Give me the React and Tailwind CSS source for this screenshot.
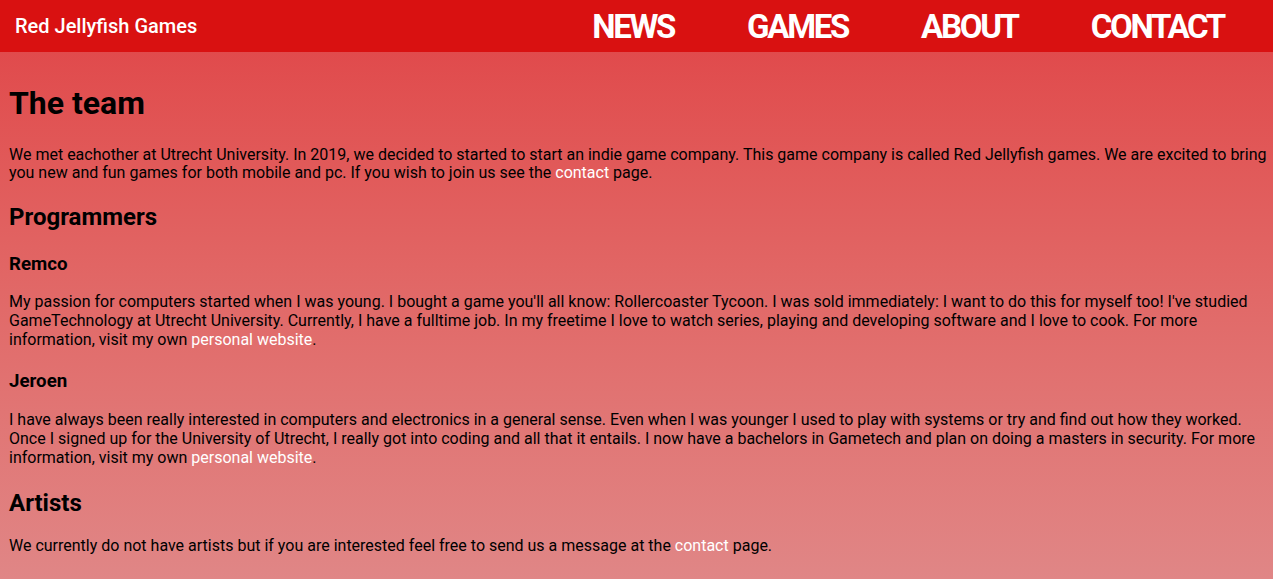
import React from 'react'

const font = { fontFamily: 'Roboto, "Liberation Sans", sans-serif' }

const navItems = ['NEWS', 'GAMES', 'ABOUT', 'CONTACT']

const Link = ({ children }) => (
  <a href="#" className="text-white">{children}</a>
)

export default function App() {
  return (
    <div className="min-h-[579px] bg-gradient-to-b from-[#e04346] to-[#e08686] text-black" style={font}>
      {/* Header */}
      <header className="h-[52px] bg-[#d91111] flex items-center justify-between pl-[15px] pr-[49px]">
        <div className="text-white text-[20px] font-medium">Red Jellyfish Games</div>
        <nav className="flex gap-[73px]">
          {navItems.map((item) => (
            <a key={item} href="#" className="text-white text-[33px] font-bold tracking-[-2.3px] leading-none">
              {item}
            </a>
          ))}
        </nav>
      </header>

      {/* Content */}
      <main className="pl-[9px] pt-[12px] pb-[20px] text-[16px] leading-[18.75px]">
        <h1 className="text-[32px] font-bold leading-[37.5px] mt-[21px] mb-[23px]">The team</h1>
        <p className="mb-[16px]">
          We met eachother at Utrecht University. In 2019, we decided to started to start an indie game company. This game company is called Red Jellyfish games. We are excited to bring you new and fun games for both mobile and pc. If you wish to join us see the <Link>contact</Link> page.
        </p>

        <h2 className="text-[24px] font-bold leading-[28px] mt-[20px] mb-[22px]">Programmers</h2>

        <h3 className="text-[18.7px] font-bold leading-[22px] mb-[18px]">Remco</h3>
        <p className="mb-[21px]">
          My passion for computers started when I was young. I bought a game you'll all know: Rollercoaster Tycoon. I was sold immediately: I want to do this for myself too! I've studied GameTechnology at Utrecht University. Currently, I have a fulltime job. In my freetime I love to watch series, playing and developing software and I love to cook. For more information, visit my own <Link>personal website</Link>.
        </p>

        <h3 className="text-[18.7px] font-bold leading-[22px] mb-[19px]">Jeroen</h3>
        <p className="mb-[21px]">
          I have always been really interested in computers and electronics in a general sense. Even when I was younger I used to play with systems or try and find out how they worked. Once I signed up for the University of Utrecht, I really got into coding and all that it entails. I now have a bachelors in Gametech and plan on doing a masters in security. For more information, visit my own <Link>personal website</Link>.
        </p>

        <h2 className="text-[24px] font-bold leading-[28px] mb-[20px]">Artists</h2>
        <p>
          We currently do not have artists but if you are interested feel free to send us a message at the <Link>contact</Link> page.
        </p>
      </main>
    </div>
  )
}
